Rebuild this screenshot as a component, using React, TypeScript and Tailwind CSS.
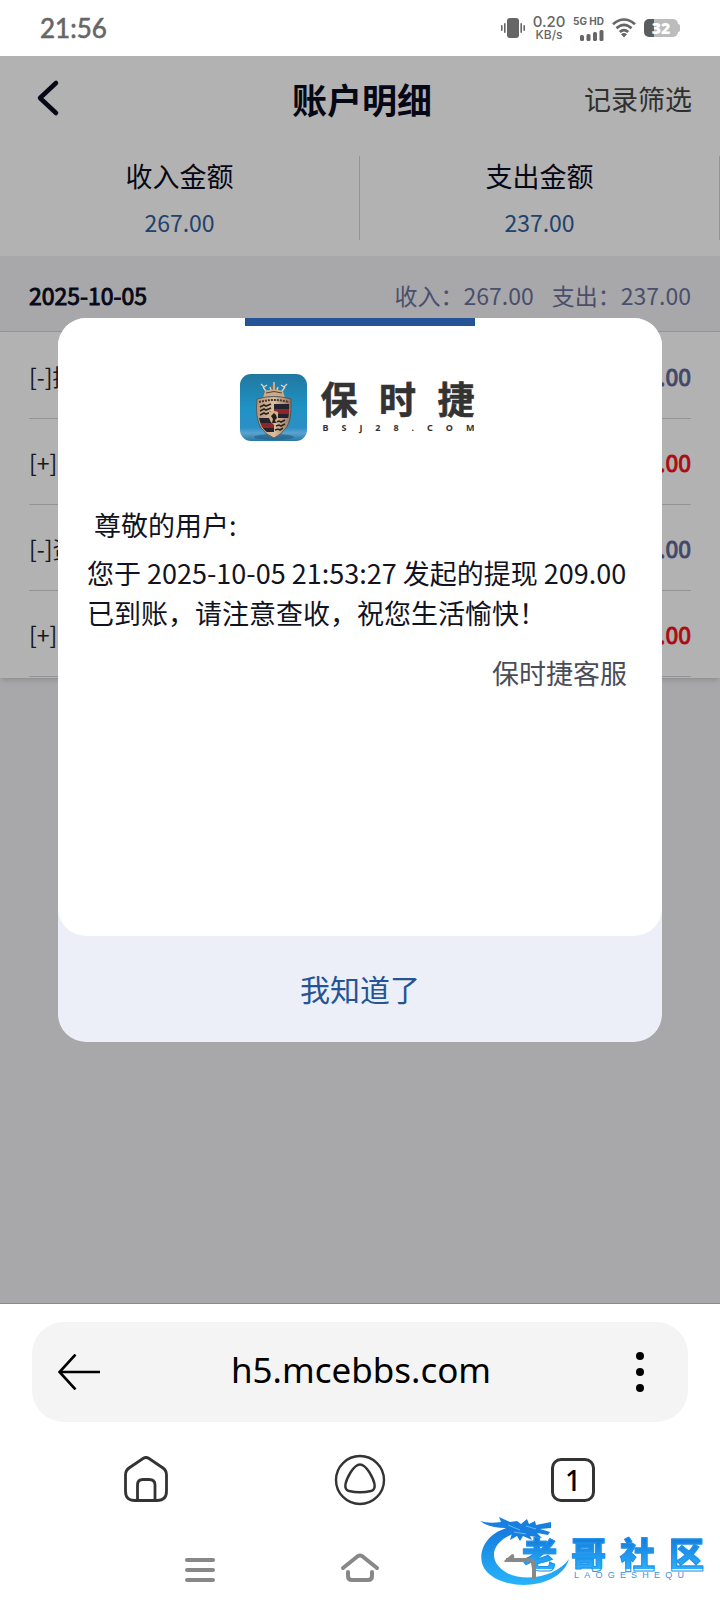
import React from "react";

const rows = [
  { label: "[-]提", amount: ".00", income: false },
  { label: "[+]", amount: ".00", income: true },
  { label: "[-]资", amount: ".00", income: false },
  { label: "[+]", amount: ".00", income: true },
];

function StatusBar() {
  return (
    <div className="flex h-14 shrink-0 items-center justify-between bg-white px-10 text-[#666]">
      <span className="font-['Lato','Noto_Sans',sans-serif] text-[26px] leading-8 [-webkit-text-stroke:0.6px_#666]">21:56</span>
      <div className="flex items-center gap-2">
        <svg className="h-5 w-6" viewBox="0 0 24 20" fill="#666" aria-hidden="true">
          <rect x="6" y="0" width="12" height="20" rx="3" />
          <rect x="3" y="5" width="1.6" height="10" rx="0.8" />
          <rect x="0" y="7" width="1.6" height="6" rx="0.8" />
          <rect x="19.4" y="5" width="1.6" height="10" rx="0.8" />
          <rect x="22.4" y="7" width="1.6" height="6" rx="0.8" />
        </svg>
        <div className="flex w-8 flex-col items-center font-['Inter',sans-serif] font-medium">
          <span className="text-[15px] leading-[14px]">0.20</span>
          <span className="text-[12px] leading-3">KB/s</span>
        </div>
        <div className="flex flex-col items-end gap-0.5 font-['Inter',sans-serif] font-bold">
          <span className="text-[10px] leading-3">5G HD</span>
          <svg className="h-3 w-6" viewBox="0 0 24 12" fill="#666" aria-hidden="true">
            <rect x="0" y="6" width="4" height="6" rx="1.5" />
            <rect x="6.5" y="5" width="4" height="7" rx="1.5" />
            <rect x="13" y="3" width="4" height="9" rx="1.5" />
            <rect x="19.5" y="1" width="4" height="11" rx="1.5" />
          </svg>
        </div>
        <svg className="h-5 w-6" viewBox="0 0 24 20" fill="none" stroke="#666" strokeWidth="2.6" aria-hidden="true">
          <path d="M1 6.2Q12-3.2 23 6.2M4.4 10.2Q12 3.4 19.6 10.2M7.8 14Q12 10.2 16.2 14" />
          <path d="M9 16.2Q12 14 15 16.2L12 19.6Z" fill="#666" stroke="none" />
        </svg>
        <div className="flex items-center">
          <div className="flex h-[18px] w-[34px] items-center justify-center rounded-[5px] bg-linear-to-r from-[#5c5c5c] from-30% to-[#bcbcbc] to-30% font-['Open_Sans',sans-serif] text-[16px] leading-[18px] font-extrabold text-white">32</div>
          <span className="h-2 w-0.5 rounded-r-sm bg-[#bcbcbc]" />
        </div>
      </div>
    </div>
  );
}

function Summary({ label, value }: { label: string; value: string }) {
  return (
    <div className="flex flex-1 flex-col items-center gap-2 border-r border-[#d4d4d4]">
      <span className="text-[27px] leading-10 text-[#0b0c22]">{label}</span>
      <span className="text-[23px] leading-9 text-[#2f609c]">{value}</span>
    </div>
  );
}

function Crest() {
  return (
    <svg className="size-[67px] shrink-0" viewBox="0 0 67 67" aria-hidden="true">
      <defs>
        <linearGradient id="sky" x1="0" y1="0" x2="0" y2="1">
          <stop offset="0" stopColor="#2277a0" />
          <stop offset="0.5" stopColor="#1e93c4" />
          <stop offset="0.8" stopColor="#2b8fc4" />
          <stop offset="0.88" stopColor="#5aa3cf" />
          <stop offset="1" stopColor="#2877a5" />
        </linearGradient>
        <linearGradient id="gold" x1="0" y1="0" x2="1" y2="0">
          <stop offset="0" stopColor="#b8947a" />
          <stop offset="0.5" stopColor="#d9bfa2" />
          <stop offset="1" stopColor="#937662" />
        </linearGradient>
        <clipPath id="shield">
          <path d="M19 27Q34 23 49 27Q50 46 45 53Q40 60 34 62Q27 60 22 53Q17 44 19 27Z" />
        </clipPath>
      </defs>
      <rect width="67" height="67" rx="11" fill="url(#sky)" />
      <ellipse cx="34" cy="63" rx="20" ry="3" fill="#1c5c82" opacity="0.6" />
      <path d="M23 12L27 18L31 15L34 7L37 15L41 18L45 12L43 22Q34 19 25 22Z" fill="#7b6d60" />
      <path d="M21 10l3 3 3-2M47 10l-3 3-3-2M23 13L28 20M45 13L40 20M34 8V18M30 13L32 19M38 13L36 19" stroke="#d8d4c8" strokeWidth="1.3" fill="none" />
      <path d="M25 17Q34 14 43 17L45 24Q34 20 23 24Z" fill="#c8ab8a" />
      <path d="M26 19Q34 16 42 19" stroke="#5b4030" strokeWidth="1" fill="none" />
      <path d="M17 25Q34 20 51 25Q52 47 46 54Q41 61 34 64Q26 61 21 54Q15 44 17 25Z" fill="url(#gold)" stroke="#5d4638" strokeWidth="0.8" />
      <g clipPath="url(#shield)">
        <path d="M34 30H50V35H34ZM34 40H50V44H34ZM17 44H34V49H17ZM19 54H34V58H19Z" fill="#232330" />
        <path d="M34 35H50V40H34ZM17 49H34V54H17Z" fill="#8f2429" />
        <path d="M20 33l4-2 2 1 5-2M20 37l4-2 2 1 5-2M20 41l4-2 2 1 5-2M36 48l3-1 2 1 4-2M36 52l3-1 2 1 4-2M35 56l3-1 2 1 3-2" stroke="#2c231c" strokeWidth="1.6" fill="none" />
      </g>
      <path d="M19 28Q34 24 49 28" stroke="#49372b" strokeWidth="2" strokeDasharray="2 1" fill="none" />
      <path d="M29 38Q34 36 38 38V44Q37 49 34 51Q30 48 29 44Z" fill="#d3b184" />
      <path d="M32 49L33 45L31 42L34 39L36 41L37 44L35 46L36 49" fill="#211c1c" />
    </svg>
  );
}

function Brand() {
  return (
    <div className="flex items-center justify-center gap-[14px] pr-1.5 text-[#333]">
      <Crest />
      <div className="flex w-[154px] flex-col gap-1 pb-0.5">
        <div className="flex justify-between text-[37px] leading-10 font-bold [-webkit-text-stroke:0.6px_#333]">
          <span>保</span><span>时</span><span>捷</span>
        </div>
        <div className="flex justify-between pl-0.5 font-['Noto_Sans',sans-serif] text-[9px] leading-3 font-bold">
          {"BSJ28.COM".split("").map((c, i) => <span key={i}>{c}</span>)}
        </div>
      </div>
    </div>
  );
}

function Notice() {
  return (
    <div className="absolute inset-0 flex items-center bg-black/30 px-[58px]">
      <section role="dialog" aria-label="保时捷客服" className="flex w-full flex-col overflow-hidden rounded-[28px] bg-[#eceff8]">
        <div className="flex min-h-[618px] flex-col rounded-b-[28px] bg-white">
          <div className="mx-auto h-2 w-[230px] bg-[#265396]" />
          <div className="pt-12">
            <Brand />
          </div>
          <div className="px-[29px] pt-16 text-[27px] leading-10 text-[#11131f]">
            <p className="pl-[7px]">尊敬的用户:</p>
            <p className="pt-2">您于 2025-10-05 21:53:27 发起的提现 209.00 已到账，请注意查收，祝您生活愉快！</p>
            <p className="pt-5 pr-1.5 text-right text-[#4a4d57]">保时捷客服</p>
          </div>
        </div>
        <button type="button" className="h-[106px] text-[30px] text-[#265396]">我知道了</button>
      </section>
    </div>
  );
}

function BrowserBar() {
  return (
    <footer className="relative shrink-0 bg-white">
      <div className="mx-8 mt-[18px] flex h-[100px] items-center justify-between rounded-[32px] bg-[#f4f4f4] px-[26px]">
        <button type="button" aria-label="返回">
          <svg className="h-9 w-[42px]" viewBox="0 0 42 36" fill="none" stroke="#000" strokeWidth="2.6" aria-hidden="true">
            <path d="M42 18H2M17.5 0.5L1.5 18L17.500 35.5" />
          </svg>
        </button>
        <span className="pb-1 pl-1 font-['Noto_Sans',sans-serif] text-[35px] leading-10 text-black">h5.mcebbs.com</span>
        <button type="button" aria-label="更多" className="flex w-11 justify-center">
          <svg className="h-10 w-2" viewBox="0 0 8 40" aria-hidden="true">
            <circle cx="4" cy="4" r="4" /><circle cx="4" cy="20" r="4" /><circle cx="4" cy="36" r="4" />
          </svg>
        </button>
      </div>
      <nav className="flex items-center justify-between pt-8 pr-[121px] pl-[120px]">
        <button type="button" aria-label="主页">
          <svg className="size-[52px]" viewBox="0 0 52 52" fill="none" stroke="#333" strokeWidth="2.8" aria-hidden="true">
            <path d="M23 4.500Q26 2.500 29 4.500L43 14Q46.500 16.500 46.500 21V37Q46.500 46.500 37 46.500H15Q5.500 46.500 5.500 37V21Q5.500 16.500 9 14Z" />
            <path d="M17.500 46V31Q17.500 25.500 23 25.500H29Q35 25.500 35 31V46" />
          </svg>
        </button>
        <button type="button" aria-label="助手">
          <svg className="size-[52px]" viewBox="0 0 52 52" fill="none" stroke="#333" strokeWidth="2.4" aria-hidden="true">
            <circle cx="26" cy="26" r="24" />
            <path d="M26 10.500C29.500 10.500 32 13 35.500 18.500Q39.500 25 40.500 30Q41.500 36 37 37Q26 39.500 15 37Q10.500 36 11.500 30Q12.500 25 16.500 18.500C20 13 22.500 10.500 26 10.500Z" />
          </svg>
        </button>
        <button type="button" className="flex size-[52px] items-center justify-center">
          <span className="flex size-11 items-center justify-center rounded-[10px] border-[3px] border-[#333] font-['Noto_Sans',sans-serif] text-[28px] leading-8 font-medium text-black">1</span>
        </button>
      </nav>
      <div className="flex items-center justify-between px-[182px] pt-[46px] pb-6">
        <button type="button" aria-label="最近任务">
          <svg className="size-9" viewBox="0 0 36 36" stroke="#888" strokeWidth="4" strokeLinecap="round" aria-hidden="true">
            <path d="M5 8H31M5 18H31M5 28H31" />
          </svg>
        </button>
        <button type="button" aria-label="桌面">
          <svg className="h-9 w-10" viewBox="0 0 40 36" fill="none" stroke="#888" strokeWidth="4" strokeLinecap="round" strokeLinejoin="round" aria-hidden="true">
            <path d="M3 16L18 4Q20 3 22 4L37 16M8 20V24Q8 28 12 28H28Q32 28 32 24V20" />
          </svg>
        </button>
        <button type="button" aria-label="后退" className="relative z-10">
          <svg className="size-9" viewBox="0 0 36 36" fill="none" stroke="#888" strokeWidth="4" aria-hidden="true">
            <path d="M4 8H26Q32 8 32 14V27" />
            <path d="M2 9L10 2Q13 2 12 6L9 10H3Z" fill="#888" stroke="none" />
          </svg>
        </button>
      </div>
      <Watermark />
    </footer>
  );
}

function Watermark() {
  return (
    <div className="pointer-events-none absolute right-4 bottom-5 h-[76px] w-[224px]">
      <svg className="absolute inset-0 size-full" viewBox="0 0 224 76" aria-hidden="true">
        <defs>
          <linearGradient id="wave" x1="0" y1="0" x2="0" y2="1">
            <stop offset="0" stopColor="#1479dc" />
            <stop offset="1" stopColor="#27b4fb" />
          </linearGradient>
        </defs>
        <path d="M32 11C2 16-6 44 8 57C28 76 80 73 89 43C77 60 46 67 27 57C7 46 10 25 36 17Z" fill="url(#wave)" />
        <path d="M0 5Q9 8 21 6L19 1L30 6L37 5L41 8L47 3L49 8L55 5L56 9L71 6L71 12L60 13L70 16L68 19L57 17L62 22L50 20L52 24L43 20L40 25L37 20L30 24L32 17L22 18L26 12Q9 12 0 5Z" fill="#167fdf" />
        <path d="M28 9L40 14M46 10L56 13M34 16L46 18" stroke="#6bb8f2" strokeWidth="1" />
      </svg>
      <div className="absolute top-[21px] right-0 flex w-[182px] justify-between bg-linear-to-b from-[#1479dc] to-[#2cb0fa] bg-clip-text text-[35px] leading-8 font-black text-transparent [-webkit-text-stroke:1px_#1f93ea]">
        <span>老</span><span>哥</span><span>社</span><span>区</span>
      </div>
      <div className="absolute right-5 bottom-3 flex w-[110px] justify-between font-['Liberation_Sans',sans-serif] text-[9px] leading-[10px] text-[#3c93e0]">
        {"LAOGESHEQU".split("").map((c, i) => <span key={i}>{c}</span>)}
      </div>
    </div>
  );
}

export default function App() {
  return (
    <div className="flex min-h-screen flex-col bg-white font-['Noto_Sans_CJK_SC',sans-serif]">
      <StatusBar />
      <main className="relative flex-1 border-b border-[#888] bg-[#f1f1f4]">
        <div className="bg-white">
          <header className="grid h-[88px] grid-cols-3 items-center pr-7 pb-0.5 pl-8">
            <button type="button" aria-label="返回" className="justify-self-start pb-1">
              <svg className="h-10 w-8" viewBox="0 0 32 40" fill="none" stroke="#0b0c22" strokeWidth="4.5" strokeLinecap="round" strokeLinejoin="round" aria-hidden="true">
                <path d="M24 6L8 21L24 36" />
              </svg>
            </button>
            <h1 className="text-center text-[35px] leading-10 font-bold whitespace-nowrap text-[#0b0c22]">账户明细</h1>
            <button type="button" className="justify-self-end text-[27px] leading-10 text-[#444]">记录筛选</button>
          </header>
          <div className="flex pt-3 pb-4">
            <Summary label="收入金额" value="267.00" />
            <Summary label="支出金额" value="237.00" />
          </div>
        </div>
        <div className="flex h-[75px] items-center justify-between px-[29px] pt-0.5 text-[23px] leading-9">
          <span className="text-[#0b0c22] [-webkit-text-stroke:0.9px_#0b0c22]">2025-10-05</span>
          <span className="flex gap-[18px] text-[#6b719d]"><span>收入：267.00</span><span>支出：237.00</span></span>
        </div>
        <ul className="border-t border-[#d5d5da] bg-white px-[29px] py-px shadow-md">
          {rows.map((r, i) => (
            <li key={i} className="flex h-[86px] items-center justify-between border-b border-[#d5d5da] text-[23px] leading-9">
              <span className="text-[#22232f]">{r.label}</span>
              <span className={r.income ? "text-[#f5101a] [-webkit-text-stroke:0.9px_#f5101a]" : "text-[#5f6799] [-webkit-text-stroke:0.9px_#5f6799]"}>{r.amount}</span>
            </li>
          ))}
        </ul>
        <Notice />
      </main>
      <BrowserBar />
    </div>
  );
}
